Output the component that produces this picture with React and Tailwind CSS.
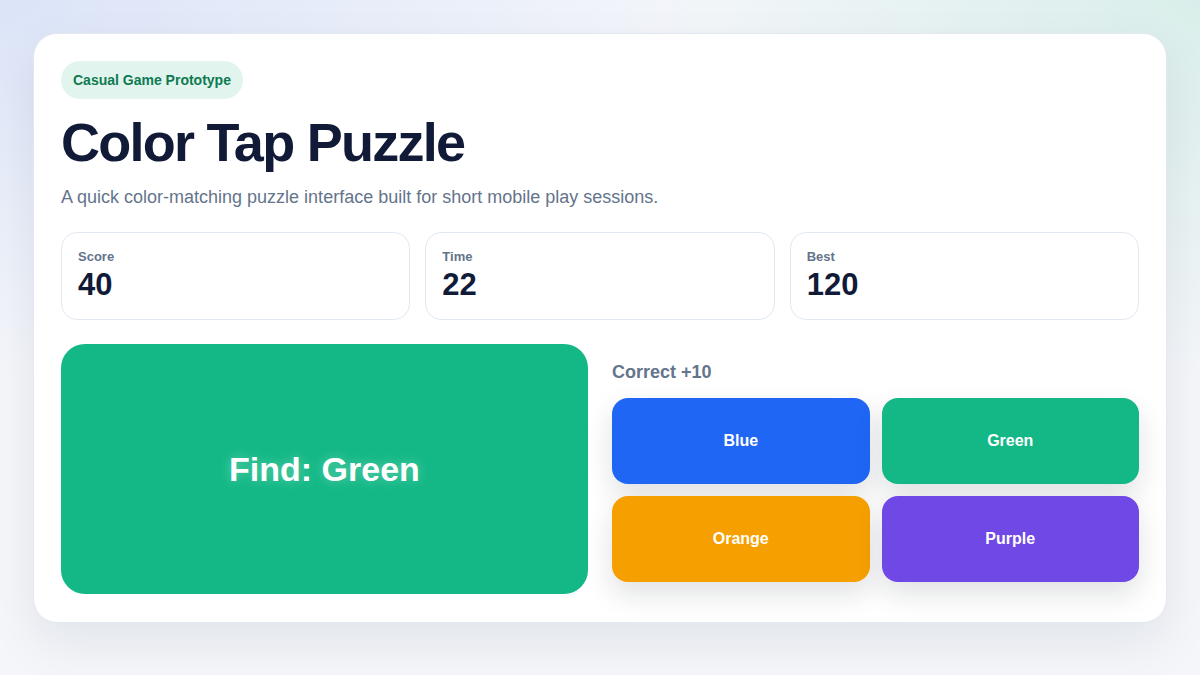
import React from "react";

const stats = [
  { label: "Score", value: "40" },
  { label: "Time", value: "22" },
  { label: "Best", value: "120" },
];

const choices = [
  { label: "Blue", cls: "bg-[#1f66f5]" },
  { label: "Green", cls: "bg-[#13b886]" },
  { label: "Orange", cls: "bg-[#f59f00]" },
  { label: "Purple", cls: "bg-[#6f48e6]" },
];

export default function App() {
  return (
    <div
      className="relative min-h-[675px] w-full overflow-hidden bg-[#f4f6fa] px-[33px] pt-[33px] pb-[53px]"
      style={{ fontFamily: '"Liberation Sans", Arial, sans-serif' }}
    >
      {/* soft page backdrop */}
      <div className="pointer-events-none absolute inset-0 bg-[radial-gradient(ellipse_60%_55%_at_0%_0%,#dbe4f8_0%,rgba(219,228,248,0)_100%)]" />
      <div className="pointer-events-none absolute inset-0 bg-[radial-gradient(ellipse_45%_55%_at_100%_0%,#d9eeea_0%,rgba(217,238,234,0)_100%)]" />

      <div className="relative rounded-3xl border border-[#e3e7ef] bg-white px-[27px] pt-[27px] pb-[28px] shadow-[0_20px_50px_rgba(15,23,42,0.08)]">
        <span className="inline-flex h-[38px] items-center rounded-full bg-[#e1f5ee] px-3 text-[14px] font-bold text-[#0f7a52]">
          Casual Game Prototype
        </span>

        <h1 className="mt-4 text-[54px] leading-none font-bold tracking-[-0.032em] text-[#111b38]">
          Color Tap Puzzle
        </h1>

        <p className="mt-[14px] text-[18px] leading-[28px] text-[#64748b]">
          A quick color-matching puzzle interface built for short mobile play sessions.
        </p>

        <div className="mt-[21px] grid grid-cols-3 gap-[15px]">
          {stats.map((s) => (
            <div key={s.label} className="rounded-2xl border border-[#e2e8f0] bg-white px-4 py-4">
              <div className="text-[13px] leading-4 font-bold text-[#64748b]">{s.label}</div>
              <div className="mt-[2px] text-[31px] leading-9 font-bold text-[#111b38]">{s.value}</div>
            </div>
          ))}
        </div>

        <div className="mt-6 grid grid-cols-2 gap-6">
          <div className="flex h-[250px] items-center justify-center rounded-3xl bg-[#13b886]">
            <span className="text-[34px] font-bold text-white [text-shadow:0_0_12px_rgba(255,255,255,0.35)]">
              Find: Green
            </span>
          </div>

          <div className="flex flex-col justify-center pt-[4px]">
            <div className="text-[18px] leading-6 font-bold text-[#64748b]">Correct +10</div>
            <div className="mt-[14px] grid grid-cols-2 gap-3">
              {choices.map((c) => (
                <button
                  key={c.label}
                  className={`flex h-[86px] items-center justify-center rounded-2xl text-[16px] font-bold text-white shadow-[0_12px_28px_rgba(15,23,42,0.13)] ${c.cls}`}
                >
                  {c.label}
                </button>
              ))}
            </div>
          </div>
        </div>
      </div>
    </div>
  );
}
